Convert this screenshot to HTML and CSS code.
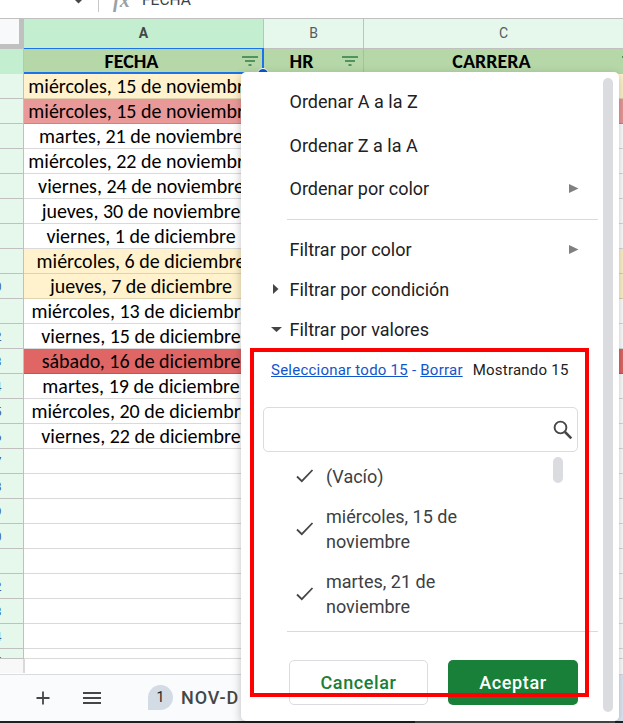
FILE: index.html
```html
<!DOCTYPE html>
<html lang="es">
<head>
<meta charset="utf-8">
<title>Hoja de cálculo</title>
<link rel="stylesheet" href="styles.css">
</head>
<body>
<div class="app">
  <div class="formula-bar">
    <svg class="name-arrow" width="10" height="5" viewBox="0 0 10 5"><path d="M0 0h9L4.500 4.500z" fill="#444746"/></svg>
    <span class="bar-divider"></span>
    <span class="fx">fx</span>
    <span class="formula">FECHA</span>
  </div>

  <div class="grid">
    <div class="row letters">
      <div class="corner"></div><div class="letter active">A</div><div class="letter">B</div><div class="letter">C</div>
    </div>
    <div class="row titles">
      <div class="num active"></div>
      <div class="title selected"><span>FECHA</span><svg class="filter" width="16" height="10" viewBox="0 0 16 10"><path d="M0 1h16M3 5h10M6.500 9h3" stroke="#2f7d47" stroke-width="1.700"/></svg></div>
      <div class="title"><span>HR</span><svg class="filter" width="16" height="10" viewBox="0 0 16 10"><path d="M0 1h16M3 5h10M6.500 9h3" stroke="#2f7d47" stroke-width="1.700"/></svg></div>
      <div class="title"><span>CARRERA</span><svg class="filter" width="16" height="10" viewBox="0 0 16 10"><path d="M0 1h16M3 5h10M6.500 9h3" stroke="#2f7d47" stroke-width="1.700"/></svg></div>
    </div>
    <div class="row yellow"><div class="num"></div><div class="cell">miércoles, 15 de noviembre</div><div class="cell rest"></div></div>
    <div class="row pink"><div class="num"></div><div class="cell">miércoles, 15 de noviembre</div><div class="cell rest"></div></div>
    <div class="row"><div class="num"></div><div class="cell">martes, 21 de noviembre</div><div class="cell rest"></div></div>
    <div class="row"><div class="num"></div><div class="cell">miércoles, 22 de noviembre</div><div class="cell rest"></div></div>
    <div class="row"><div class="num"></div><div class="cell">viernes, 24 de noviembre</div><div class="cell rest"></div></div>
    <div class="row"><div class="num"></div><div class="cell">jueves, 30 de noviembre</div><div class="cell rest"></div></div>
    <div class="row"><div class="num"></div><div class="cell">viernes, 1 de diciembre</div><div class="cell rest"></div></div>
    <div class="row yellow"><div class="num"></div><div class="cell">miércoles, 6 de diciembre</div><div class="cell rest"></div></div>
    <div class="row yellow"><div class="num">10</div><div class="cell">jueves, 7 de diciembre</div><div class="cell rest"></div></div>
    <div class="row"><div class="num">11</div><div class="cell">miércoles, 13 de diciembre</div><div class="cell rest"></div></div>
    <div class="row"><div class="num">12</div><div class="cell">viernes, 15 de diciembre</div><div class="cell rest"></div></div>
    <div class="row red"><div class="num">13</div><div class="cell">sábado, 16 de diciembre</div><div class="cell rest"></div></div>
    <div class="row"><div class="num">14</div><div class="cell">martes, 19 de diciembre</div><div class="cell rest"></div></div>
    <div class="row"><div class="num">15</div><div class="cell">miércoles, 20 de diciembre</div><div class="cell rest"></div></div>
    <div class="row"><div class="num">16</div><div class="cell">viernes, 22 de diciembre</div><div class="cell rest"></div></div>
    <div class="row"><div class="num">17</div><div class="cell"></div><div class="cell rest"></div></div>
    <div class="row"><div class="num">18</div><div class="cell"></div><div class="cell rest"></div></div>
    <div class="row"><div class="num">19</div><div class="cell"></div><div class="cell rest"></div></div>
    <div class="row"><div class="num">20</div><div class="cell"></div><div class="cell rest"></div></div>
    <div class="row"><div class="num">21</div><div class="cell"></div><div class="cell rest"></div></div>
    <div class="row"><div class="num">22</div><div class="cell"></div><div class="cell rest"></div></div>
    <div class="row"><div class="num">23</div><div class="cell"></div><div class="cell rest"></div></div>
    <div class="row"><div class="num">24</div><div class="cell"></div><div class="cell rest"></div></div>
    <div class="row cut"><div class="num">25</div><div class="cell"></div><div class="cell rest"></div></div>
    <div class="scroll-track"><div class="track-corner"></div></div>
  </div>

  <div class="tabs">
    <svg class="plus" width="14" height="14" viewBox="0 0 14 14"><path d="M7 .5v13M.5 7h13" stroke="#444746" stroke-width="1.800"/></svg>
    <svg class="burger" width="18" height="12" viewBox="0 0 18 12"><path d="M0 1h18M0 6h18M0 11h18" stroke="#444746" stroke-width="2"/></svg>
    <span class="badge">1</span>
    <span class="tab-name">NOV-D</span>
    <span class="tab-end"></span>
  </div>
  <div class="desktop"></div>
</div>

<div class="handle"></div>

<div class="menu">
  <div class="item tall">Ordenar A a la Z</div>
  <div class="item tall">Ordenar Z a la A</div>
  <div class="item color-sort">Ordenar por color<svg class="sub" width="10" height="9" viewBox="0 0 10 9"><path d="M0 0v9l9.500-4.500z" fill="#808080"/></svg></div>
  <div class="separator first"></div>
  <div class="item">Filtrar por color<svg class="sub" width="10" height="9" viewBox="0 0 10 9"><path d="M0 0v9l9.500-4.500z" fill="#808080"/></svg></div>
  <div class="item toggle"><span class="mark"><svg width="6" height="10" viewBox="0 0 6 10"><path d="M0 0v10l5.500-5z" fill="#444746"/></svg></span>Filtrar por condición</div>
  <div class="item toggle"><span class="mark"><svg width="11" height="5" viewBox="0 0 11 5"><path d="M0 0h11L5.500 5z" fill="#444746"/></svg></span>Filtrar por valores</div>
  <div class="links"><a>Seleccionar todo 15</a><span class="dash">-</span><a>Borrar</a><span class="count">Mostrando 15</span></div>
  <div class="search"><svg width="20" height="20" viewBox="0 0 20 20" fill="none" stroke="#444746"><circle cx="7.500" cy="7.500" r="5.900" stroke-width="1.900"/><path d="M12 12l6.300 6.300" stroke-width="2.500"/></svg></div>
  <div class="values">
    <div class="options">
      <div class="option"><svg class="check" width="18" height="14" viewBox="0 0 18 14"><path d="M1 7.500l4.800 4.700L16.500 1" fill="none" stroke="#444746" stroke-width="1.800"/></svg><span>(Vacío)</span></div>
      <div class="option two"><svg class="check" width="18" height="14" viewBox="0 0 18 14"><path d="M1 7.500l4.800 4.700L16.500 1" fill="none" stroke="#444746" stroke-width="1.800"/></svg><span>miércoles, 15 de<br>noviembre</span></div>
      <div class="option two"><svg class="check" width="18" height="14" viewBox="0 0 18 14"><path d="M1 7.500l4.800 4.700L16.500 1" fill="none" stroke="#444746" stroke-width="1.800"/></svg><span>martes, 21 de<br>noviembre</span></div>
    </div>
    <div class="list-thumb"></div>
  </div>
  <div class="separator second"></div>
  <div class="buttons"><div class="button cancel">Cancelar</div><div class="button accept">Aceptar</div></div>
  <div class="menu-thumb"></div>
</div>
<div class="highlight"></div>
</body>
</html>
```
FILE: styles.css
```css
* { box-sizing: border-box; }
body {
  margin: 0;
  width: 623px;
  height: 723px;
  overflow: hidden;
  position: relative;
  background: #fff;
  font-family: Roboto, "Liberation Sans", sans-serif;
}
svg { display: block; flex: none; }
.app { width: 623px; height: 723px; overflow: hidden; display: flex; flex-direction: column; }

.formula-bar {
  height: 19px;
  flex: none;
  display: flex;
  align-items: flex-start;
  overflow: hidden;
  border-bottom: 1px solid #c0c0c0;
}
.name-arrow { margin-left: 74px; margin-top: -1px; }
.bar-divider { width: 1px; height: 12px; margin-left: 14px; background: #c7c7c7; }
.fx {
  margin: -10px 0 0 14px;
  width: 18px;
  font: italic bold 20px/20px "Liberation Serif", serif;
  color: #9aa0a6;
}
.formula { margin: -10px 0 0 11px; font-size: 15.500px; line-height: 20px; color: #3c4043; }

.grid { flex: none; height: 656px; width: 644px; }
.row { display: grid; grid-template-columns: 24px 240px 380px; height: 25px; }
.letters, .titles { grid-template-columns: 24px 240px 100px 280px; }
.letters { height: 30px; }
.corner { background: #f8f9fa; border-right: 5px solid #c0c0c0; border-bottom: 5px solid #c0c0c0; }
.letter {
  background: #e6f8ec;
  border-right: 1px solid #c0c0c0;
  border-bottom: 1px solid #c0c0c0;
  display: flex;
  align-items: center;
  justify-content: center;
  padding-bottom: 1px;
  font-size: 14px;
  color: #575b5f;
}
.letter.active { background: #c4eed0; color: #444746; font-weight: 700; }
.num {
  background: #e6f8ec;
  border-right: 1px solid #c0c0c0;
  border-bottom: 1px solid #c0c0c0;
  font-size: 13px;
  line-height: 25px;
  text-indent: -13px;
  overflow: hidden;
  color: #3f6191;
}
.num.active { background: #c4eed0; }
.title {
  background: #b6d7a8;
  display: flex;
  align-items: center;
  border-right: 1px solid #a5c19a;
  font-family: Carlito, Lato, sans-serif;
  font-weight: 700;
  font-size: 20px;
  line-height: 24px;
  color: #000;
  padding: 0 4px 2px 0;
}
.title span { flex: 1; text-align: center; padding-right: 3px; }
.title .filter { margin-right: 1px; }
.title.selected { border: solid #1a73e8; border-width: 1px 2px 2px 0; padding: 0 3px 0 0; margin-top: -1px; height: 26px; }
.cell {
  border-bottom: 1px solid #dadada;
  font-family: Carlito, Lato, sans-serif;
  font-size: 20px;
  line-height: 24px;
  text-align: center;
  padding-right: 6px;
  white-space: nowrap;
  overflow: hidden;
  color: #000;
}
.yellow .cell { background: #fff2cc; border-color: #e0d3b0; }
.pink .cell { background: #ea9999; border-color: #c98484; }
.red .cell { background: #e06666; border-color: #bd5656; }
.cut { height: 10px; }
.scroll-track { height: 16px; border-bottom: 1px solid #dadce0; }
.track-corner { width: 25px; height: 14px; background: #f8f8f8; border-right: 2px solid #dadada; }

.tabs { height: 46px; flex: none; background: #f9fbfd; display: flex; align-items: center; }
.plus { margin-left: 36px; }
.burger { margin-left: 33px; }
.badge {
  width: 25px;
  height: 25px;
  margin: -2px 0 0 47px;
  border-radius: 13px 13px 13px 0;
  background: #d3dbe5;
  text-align: center;
  font-size: 14px;
  line-height: 25px;
  color: #1f1f1f;
}
.tab-name { margin: -1px 0 0 8px; font-size: 18px; font-weight: 500; letter-spacing: .9px; color: #444746; }
.tab-end { margin-left: auto; width: 8px; height: 46px; background: #e1e9f7; }
.desktop { height: 2px; flex: none; background: linear-gradient(90deg, #202020 415px, #505050 415px 615px, #202020 615px); }

.handle {
  position: absolute;
  left: 257px;
  top: 68px;
  width: 12px;
  height: 12px;
  border: 1px solid #fff;
  border-radius: 50%;
  background: #0b57d0;
}

.menu {
  position: absolute;
  left: 241px;
  top: 72px;
  width: 378px;
  height: 649px;
  padding-top: 7px;
  background: #fff;
  border-radius: 5px;
  box-shadow: 0 3px 10px rgba(0, 0, 0, .25);
  color: #202124;
}
.item {
  height: 40px;
  padding: 0 40px 0 48.500px;
  display: flex;
  align-items: center;
  justify-content: space-between;
  font-size: 18px;
}
.tall { height: 44px; }
.color-sort { height: 43px; }
.toggle { justify-content: flex-start; padding-left: 29px; }
.mark { width: 19.500px; display: flex; justify-content: center; padding-right: 7px; }
.separator { height: 1px; width: 311px; margin-left: 46px; background: #d8dadd; }
.first { margin-top: 9px; margin-bottom: 9px; }
.links { height: 40px; margin-top: 1px; padding-left: 30px; display: flex; align-items: center; font-size: 15px; letter-spacing: .23px; white-space: nowrap; }
.links a { color: #1155cc; text-decoration: underline; }
.dash { margin: 0 4px; color: #1155cc; }
.count { margin-left: 10px; }
.search {
  width: 315px;
  height: 45px;
  margin: 17px 0 0 22px;
  border: 1px solid #dadce0;
  border-radius: 5px;
  display: flex;
  align-items: center;
  justify-content: flex-end;
  padding-right: 4px;
}
.values { height: 174px; margin-top: 5px; display: flex; }
.options { width: 316px; margin-top: -1px; }
.option { height: 40px; padding-left: 55px; display: flex; align-items: center; font-size: 18px; line-height: 25px; color: #3c4043; }
.option.two { height: 65px; }
.check { margin-right: 12px; }
.list-thumb { width: 10px; height: 26px; margin-left: -4px; border-radius: 5px; background: #dadce0; }
.buttons { display: flex; gap: 20px; margin: 28px 0 0 48px; }
.button {
  height: 45px;
  display: flex;
  align-items: center;
  justify-content: center;
  padding-bottom: 1px;
  border-radius: 5px;
  font-size: 18px;
  font-weight: 500;
  letter-spacing: .6px;
}
.cancel { width: 139px; border: 1px solid #dadce0; color: #188038; }
.accept { width: 130px; background: #188038; color: #fff; }
.menu-thumb { position: absolute; left: 362px; top: 6px; width: 10px; height: 634px; border-radius: 5px; background: #dadce0; }

.highlight { position: absolute; left: 250px; top: 348px; width: 339px; height: 349px; border: 4px solid #f00; }
```
